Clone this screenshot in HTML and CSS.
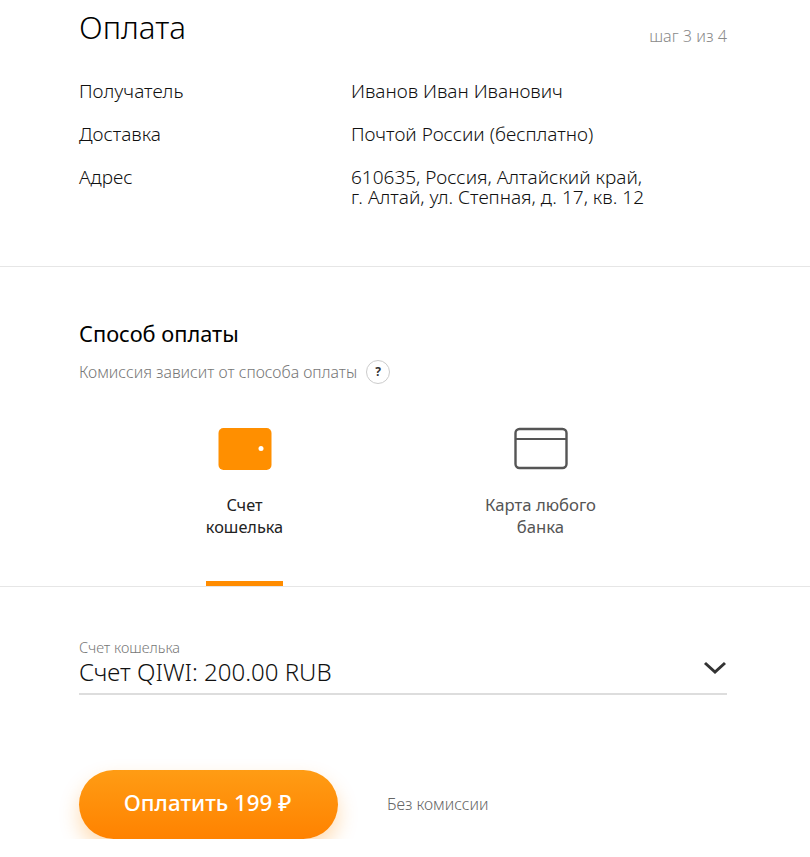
FILE: index.html
```html
<!DOCTYPE html>
<html>
<head>
	<title>Оплата</title>
	<meta charset="utf-8">
	<link rel="stylesheet" href="styles.css">
</head>
<body>
	<section class="summary">
		<div class="summary-head">
			<h1>Оплата</h1>
			<span class="step">шаг 3 из 4</span>
		</div>
		<div class="info-row">
			<div class="info-label">Получатель</div>
			<div class="info-value">Иванов Иван Иванович</div>
		</div>
		<div class="info-row">
			<div class="info-label">Доставка</div>
			<div class="info-value">Почтой России (бесплатно)</div>
		</div>
		<div class="info-row">
			<div class="info-label">Адрес</div>
			<div class="info-value">610635, Россия, Алтайский край,<br>г. Алтай, ул. Степная, д. 17, кв. 12</div>
		</div>
	</section>

	<section class="methods">
		<h2>Способ оплаты</h2>
		<div class="hint">
			<span>Комиссия зависит от способа оплаты</span>
			<span class="hint-icon">?</span>
		</div>
		<div class="tabs">
			<div class="tab active">
				<svg width="54" height="44" viewBox="0 0 54 44">
					<rect x="0.5" y="1" width="53" height="42" rx="5" fill="#ff8f00"/>
					<circle cx="43" cy="21.5" r="2.5" fill="#fff"/>
				</svg>
				<div class="tab-label">Счет<br>кошелька</div>
			</div>
			<div class="tab wide">
				<svg width="54" height="44" viewBox="0 0 54 44">
					<rect x="1.5" y="2" width="51" height="39" rx="4" fill="none" stroke="#555" stroke-width="2.4"/>
					<path d="M1.5 12h51" stroke="#555" stroke-width="2"/>
				</svg>
				<div class="tab-label">Карта любого<br>банка</div>
			</div>
		</div>
	</section>

	<section class="account">
		<div class="select">
			<div>
				<div class="select-label">Счет кошелька</div>
				<div class="select-value">Счет QIWI: 200.00 RUB</div>
			</div>
			<svg class="select-arrow" width="24" height="14" viewBox="0 0 24 14">
				<path d="M2 2l10 9 10-9" fill="none" stroke="#333" stroke-width="3"/>
			</svg>
		</div>
		<div class="pay">
			<button class="pay-btn">Оплатить 199 ₽</button>
			<span class="fee">Без комиссии</span>
		</div>
	</section>
</body>
</html>
```

FILE: styles.css
```css
body {
	font-family: "Noto Sans", sans-serif;
	font-weight: 300;
	margin: 0;
	background-color: #fff;
	color: #1a1a1a;
}

.summary {
	height: 266px;
	padding: 0 83px 0 79px;
	border-bottom: 1px solid #e6e6e6;
}

.summary-head {
	display: flex;
	justify-content: space-between;
	height: 81px;
}

h1 {
	font-size: 31.4px;
	font-weight: 300;
	line-height: 36px;
	margin: 9px 0 0;
	color: #000;
}

.step {
	font-size: 16.2px;
	line-height: 20px;
	margin-top: 26px;
	color: #8a8a8a;
}

.info-row {
	display: flex;
	margin-bottom: 23px;
	font-size: 19px;
	line-height: 20px;
}

.info-label {
	width: 272px;
	color: #111;
}

.info-value {
	color: #111;
}

.methods {
	height: 319px;
	border-bottom: 1px solid #e6e6e6;
	padding: 0 79px;
	overflow: hidden;
}

h2 {
	font-size: 21.8px;
	font-weight: 400;
	line-height: 24px;
	margin: 55px 0 0;
	color: #000;
}

.hint {
	display: flex;
	align-items: center;
	gap: 9px;
	margin-top: 14px;
	font-size: 15.85px;
	color: #777;
}

.hint-icon {
	width: 22px;
	height: 22px;
	border: 1px solid #ccc;
	border-radius: 50%;
	text-align: center;
	font-size: 12px;
	font-weight: 700;
	line-height: 22px;
	color: #333;
}

.tabs {
	display: flex;
	margin-top: 43px;
	padding-left: 127px;
	gap: 202px;
}

.tab {
	display: flex;
	flex-direction: column;
	align-items: center;
	width: 77px;
	height: 160px;
	box-sizing: border-box;
	color: #555;
	font-size: 16.3px;
	font-weight: 400;
	line-height: 22px;
	text-align: center;
	white-space: nowrap;
}

.tab.wide {
	width: 111px;
	font-size: 16.7px;
}

.tab.active {
	color: #222;
	border-bottom: 6px solid #ff8c00;
}

.tab-label {
	margin-top: 23px;
}

.account {
	padding: 0 83px 0 79px;
}

.select {
	display: flex;
	justify-content: space-between;
	margin-top: 51px;
	padding-bottom: 8px;
	border-bottom: 2px solid #ddd;
}

.select-label {
	font-size: 14.5px;
	line-height: 18px;
	color: #777;
}

.select-value {
	margin-top: 2px;
	font-size: 24px;
	line-height: 27px;
	color: #111;
}

.select-arrow {
	margin-top: 23px;
}

.pay {
	display: flex;
	align-items: center;
	margin-top: 75px;
}

.pay-btn {
	width: 259px;
	height: 69px;
	padding: 0 2px 4px 0;
	border: 0;
	border-radius: 35px;
	background: linear-gradient(#ff9c14, #ff8200);
	box-shadow: 0 10px 20px rgba(255, 140, 0, 0.3);
	color: #fff;
	font-family: inherit;
	font-size: 22.3px;
	font-weight: 500;
}

.fee {
	margin-left: 49px;
	padding-bottom: 2px;
	font-size: 15.8px;
	color: #666;
}
```
